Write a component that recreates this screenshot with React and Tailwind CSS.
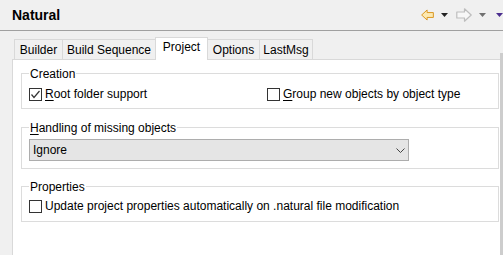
import React from "react";

const Check = ({ checked }) => (
  <span className="w-[13px] h-[13px] border border-[#333333] bg-white flex items-center justify-center shrink-0">
    {checked && (
      <svg width="11" height="11" viewBox="0 0 11 11">
        <polyline points="1.5,5.5 4,8.5 9.5,2" fill="none" stroke="#333333" strokeWidth="1.2" />
      </svg>
    )}
  </span>
);

const Group = ({ title, className, children }) => (
  <fieldset className={`ml-[8px] w-[478px] border border-[#dcdcdc] pl-[7px] ${className}`}>
    <legend className="px-[1px] pt-[2px] leading-[14px]">{title}</legend>
    {children}
  </fieldset>
);

const tabs = [
  { name: "Builder", w: "w-[49px]" },
  { name: "Build Sequence", w: "w-[94px]" },
  { name: "Project", w: "w-[53px]", active: true },
  { name: "Options", w: "w-[53px]" },
  { name: "LastMsg", w: "w-[54px]" },
];

const Arrow = ({ dir, stroke, fill }) => (
  <svg width="16" height="14" viewBox="0 0 16 14" className={dir === "right" ? "-scale-x-100" : ""}>
    <polygon
      points="0.8,7 7.5,0.8 7.5,4 15.2,4 15.2,10 7.5,10 7.5,13.2"
      fill={fill}
      stroke={stroke}
      strokeWidth="1.2"
      strokeLinejoin="round"
    />
  </svg>
);

const Tri = ({ color }) => (
  <svg width="7" height="4" viewBox="0 0 7 4">
    <polygon points="0,0 7,0 3.5,4" fill={color} />
  </svg>
);

export default function App() {
  return (
    <div className="w-[503px] h-[255px] overflow-hidden bg-[#f0f0f0] text-[12px] text-black font-['Liberation_Sans',sans-serif]">
      <div className="h-[31px] border-b border-[#a0a0a0] flex items-center pl-[12px]">
        <span className="text-[14px] leading-[16px] font-bold">Natural</span>
        <div className="ml-auto w-[82px] shrink-0 flex items-center">
          <Arrow dir="left" stroke="#d9951f" fill="#fde9b0" />
          <span className="ml-[7px]"><Tri color="#222222" /></span>
          <span className="ml-[8px]"><Arrow dir="right" stroke="#bdbdbd" fill="#f7f7f7" /></span>
          <span className="ml-[7px]"><Tri color="#707070" /></span>
          <span className="ml-[10px]"><Tri color="#4b2e8f" /></span>
        </div>
      </div>

      <div className="flex h-[224px]">
        <div className="w-[500px] flex flex-col">
          <div className="h-[28px] flex items-end pl-[14px]">
            {tabs.map((t, i) =>
              t.active ? (
                <div
                  key={t.name}
                  className={`${t.w} h-[23px] -mb-[1px] -ml-[1px] relative z-10 bg-white border-l border-r border-t border-[#d9d9d9] pt-[2px] leading-[14px] text-center`}
                >
                  {t.name}
                </div>
              ) : (
                <div
                  key={t.name}
                  className={`${t.w} h-[20px] ${i === 0 ? "" : "-ml-[1px]"} border-l border-r border-t border-[#d9d9d9] bg-[#f0f0f0] pt-[3px] leading-[14px] text-center`}
                >
                  {t.name}
                </div>
              )
            )}
          </div>

          <div className="ml-[12px] flex-1 bg-white border-l border-t border-[#d9d9d9]">
            <Group title="Creation" className="mt-[5px] pb-[6px]">
              <div className="mt-[5px] h-[16px] flex items-center">
                <div className="w-[238px] flex items-center gap-[3px]">
                  <Check checked />
                  <span className="leading-[14px]"><u className="underline-offset-[2px]">R</u>oot folder support</span>
                </div>
                <div className="flex items-center gap-[3px]">
                  <Check />
                  <span className="leading-[14px]"><u className="underline-offset-[2px]">G</u>roup new objects by object type</span>
                </div>
              </div>
            </Group>

            <Group
              title={<><u className="underline-offset-[2px]">H</u>andling of missing objects</>}
              className="mt-[10px] pb-[7px]"
            >
              <div className="mt-[4px] w-[380px] h-[22px] border border-[#adadad] bg-[#e5e5e5] flex items-center pl-[3px] pr-[3px]">
                <span className="leading-[14px]">Ignore</span>
                <svg width="9" height="5" viewBox="0 0 9 5" className="ml-auto">
                  <polyline points="0.5,0.5 4.5,4.5 8.5,0.5" fill="none" stroke="#444444" strokeWidth="1" />
                </svg>
              </div>
            </Group>

            <Group title="Properties" className="mt-[9px] pb-[7px]">
              <div className="mt-[4px] h-[16px] flex items-center gap-[3px]">
                <Check />
                <span className="leading-[14px]">Update project properties automatically on .natural file modification</span>
              </div>
            </Group>
          </div>
        </div>

        <div className="w-[3px] pt-[22px] flex flex-col">
          <div className="flex-1 bg-[#cdcdcd]" />
        </div>
      </div>
    </div>
  );
}
